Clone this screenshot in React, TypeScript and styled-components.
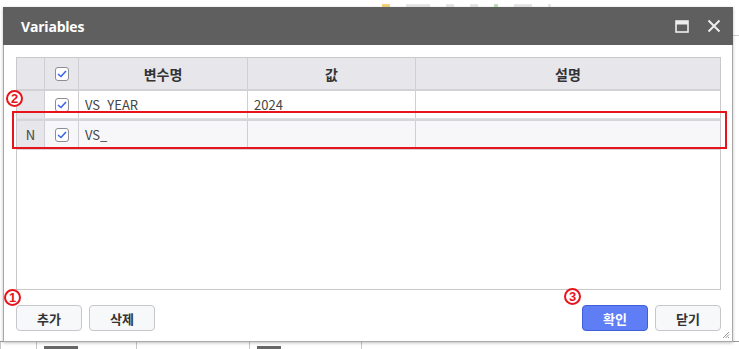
import styled, { createGlobalStyle } from "styled-components";

const GlobalStyle = createGlobalStyle`
  html, body {
    margin: 0;
    padding: 0;
    background: #ffffff;
  }
  body {
    font-family: "Noto Sans CJK KR", "Noto Sans", sans-serif;
  }
`;

const Page = styled.div`
  position: relative;
  width: 739px;
  height: 349px;
  overflow: hidden;
  background: #ffffff;
`;

// faint page behind the dialog (only its edges show)
const Backdrop = styled.div`
  position: absolute;
  inset: 0;
  display: flex;
  flex-direction: column;
  justify-content: space-between;
`;

const BackTop = styled.div`
  height: 7px;
  display: flex;
  align-items: flex-end;
  gap: 16px;
  padding-left: 382px;
`;

const Smudge = styled.span<{ $w: number; $c?: string }>`
  width: ${(p) => p.$w}px;
  height: 3px;
  background: ${(p) => p.$c || "#e6e6e6"};
`;

const BackSheet = styled.div`
  height: 7px;
  border-top: 1px solid #9a9a9a;
  display: grid;
  grid-template-columns: 36px 100px 113px 112px 1fr;
`;

const BackCell = styled.div`
  border-left: 1px solid #c8c8c8;
  padding: 4px 0 0 7px;
  display: flex;
`;

const BackRight = styled.div`
  position: absolute;
  right: 0;
  top: 35px;
  width: 6px;
  border-top: 1px solid #cfcfcf;
`;

const Dialog = styled.div`
  position: absolute;
  left: 3px;
  top: 7px;
  width: 730px;
  height: 335px;
  box-sizing: border-box;
  background: #ffffff;
  border: 1px solid #a9a9a9;
  border-top: none;
  box-shadow: 0 1px 3px rgba(0, 0, 0, 0.25);
  display: flex;
  flex-direction: column;
`;

const TitleBar = styled.div`
  height: 38px;
  margin: 0 -1px;
  background: #5f5f5f;
  display: flex;
  align-items: center;
  padding: 0 12px 0 18px;
  flex-shrink: 0;
`;

const Title = styled.div`
  flex: 1;
  color: #ffffff;
  font-family: "Open Sans", "Noto Sans", sans-serif;
  font-weight: 700;
  font-size: 14px;
  letter-spacing: -0.2px;
`;

const TitleIcons = styled.div`
  display: flex;
  align-items: center;
  gap: 18px;
`;

const Body = styled.div`
  flex: 1;
  display: flex;
  flex-direction: column;
  padding: 12px 11px 10px 12px;
`;

const Grid = styled.div`
  height: 233px;
  box-sizing: border-box;
  border: 1px solid #c9c9cc;
  display: flex;
  flex-direction: column;
  font-size: 13px;
  color: #333;
`;

const COLS = "27px 34px 169px 168px 1fr";

const HeaderRow = styled.div`
  display: grid;
  grid-template-columns: ${COLS};
  height: 31px;
  background: #e6e6eb;
  border-bottom: 2px solid #d2d2d6;
`;

const Row = styled.div<{ $alt?: boolean }>`
  display: grid;
  grid-template-columns: ${COLS};
  height: 27px;
  background: ${(p) => (p.$alt ? "#f7f7f9" : "#ffffff")};
  border-bottom: ${(p) => (p.$alt ? "2px solid #d6d6da" : "1px solid #e0e0e4")};
  border-top: ${(p) => (p.$alt ? "2px solid #d6d6da" : "none")};
`;

const Cell = styled.div<{ $center?: boolean; $head?: boolean; $gray?: boolean }>`
  display: flex;
  align-items: center;
  justify-content: ${(p) => (p.$center ? "center" : "flex-start")};
  padding: ${(p) => (p.$center ? "0" : "0 6px")};
  border-left: 1px solid #cfcfd3;
  font-size: ${(p) => (p.$head ? "14px" : "13px")};
  font-weight: ${(p) => (p.$head ? 700 : 400)};
  background: ${(p) => (p.$gray ? "#e6e6eb" : "transparent")};
  color: ${(p) => (p.$head ? "#333" : "#444")};
  &:first-child {
    border-left: none;
  }
`;

const Check = styled.span`
  width: 14px;
  height: 14px;
  box-sizing: border-box;
  border: 1px solid #8d8d95;
  border-radius: 3px;
  background: #fff;
  display: flex;
  align-items: center;
  justify-content: center;
`;

const Footer = styled.div`
  margin-top: 15px;
  display: flex;
  align-items: center;
  gap: 7px;
`;

const Spacer = styled.div`
  flex: 1;
`;

const Button = styled.button<{ $primary?: boolean }>`
  width: 66px;
  height: 26px;
  box-sizing: border-box;
  border-radius: 4px;
  border: 1px solid ${(p) => (p.$primary ? "#3f5fd8" : "#c6c6cb")};
  background: ${(p) => (p.$primary ? "#5f7ef5" : "#f7f8fa")};
  color: ${(p) => (p.$primary ? "#ffffff" : "#333333")};
  font-family: "Noto Sans CJK KR", sans-serif;
  font-size: 13px;
  font-weight: 700;
  padding: 0;
`;

const Marker = styled.div<{ $x: number; $y: number }>`
  position: absolute;
  left: ${(p) => p.$x}px;
  top: ${(p) => p.$y}px;
  width: 17px;
  height: 17px;
  box-sizing: border-box;
  border: 2px solid #e8141b;
  border-radius: 50%;
  background: #fff;
  color: #e8141b;
  font-family: "Liberation Sans", sans-serif;
  font-weight: 700;
  font-size: 13px;
  line-height: 13px;
  text-align: center;
`;

const Highlight = styled.div`
  position: absolute;
  left: 12px;
  top: 111px;
  width: 715px;
  height: 38px;
  box-sizing: border-box;
  border: 2px solid #e8141b;
`;

const Grip = styled.svg`
  position: absolute;
  right: 2px;
  bottom: 2px;
`;

function CheckBox() {
  return (
    <Check>
      <svg width="10" height="8" viewBox="0 0 10 8">
        <path d="M1 4 L4 6.5 L9 1" fill="none" stroke="#3b63f0" strokeWidth="1.6" />
      </svg>
    </Check>
  );
}

function MaxIcon() {
  return (
    <svg width="14" height="13" viewBox="0 0 14 13">
      <rect x="1" y="1" width="12" height="11" fill="none" stroke="#eeeeee" strokeWidth="1.6" />
      <rect x="1" y="1" width="12" height="3.5" fill="#eeeeee" />
    </svg>
  );
}

function CloseIcon() {
  return (
    <svg width="14" height="14" viewBox="0 0 14 14">
      <path d="M1.5 1.5 L12.5 12.5 M12.5 1.5 L1.5 12.5" stroke="#eeeeee" strokeWidth="2" />
    </svg>
  );
}

const rows = [
  { num: "", name: "VS_YEAR", value: "2024", desc: "", alt: false },
  { num: "N", name: "VS_", value: "", desc: "", alt: true },
];

export default function App() {
  return (
    <Page>
      <GlobalStyle />
      <Backdrop>
        <BackTop>
          <Smudge $w={8} $c="#f5d27a" />
          <Smudge $w={24} />
          <Smudge $w={8} />
          <Smudge $w={8} />
          <Smudge $w={4} $c="#b9e2b9" />
          <Smudge $w={18} />
          <Smudge $w={3} />
        </BackTop>
        <BackSheet>
          <BackCell />
          <BackCell>
            <Smudge $w={34} $c="#666" />
          </BackCell>
          <BackCell />
          <BackCell>
            <Smudge $w={24} $c="#666" />
          </BackCell>
          <BackCell />
        </BackSheet>
      </Backdrop>
      <BackRight />

      <Dialog>
        <TitleBar>
          <Title>Variables</Title>
          <TitleIcons>
            <MaxIcon />
            <CloseIcon />
          </TitleIcons>
        </TitleBar>
        <Body>
          <Grid>
            <HeaderRow>
              <Cell $center $head />
              <Cell $center>
                <CheckBox />
              </Cell>
              <Cell $center $head>변수명</Cell>
              <Cell $center $head>값</Cell>
              <Cell $center $head>설명</Cell>
            </HeaderRow>
            {rows.map((r, idx) => (
              <Row key={idx} $alt={r.alt}>
                <Cell $center $gray>{r.num}</Cell>
                <Cell $center>
                  <CheckBox />
                </Cell>
                <Cell>{r.name}</Cell>
                <Cell>{r.value}</Cell>
                <Cell>{r.desc}</Cell>
              </Row>
            ))}
          </Grid>
          <Footer>
            <Button>추가</Button>
            <Button>삭제</Button>
            <Spacer />
            <Button $primary>확인</Button>
            <Button>닫기</Button>
          </Footer>
        </Body>
        <Grip width="8" height="8" viewBox="0 0 8 8">
          <path d="M7 1 L1 7 M7 3.5 L3.5 7 M7 6 L6 7" stroke="#999" strokeWidth="1" />
        </Grip>
      </Dialog>

      <Highlight />
      <Marker $x={6} $y={90}>2</Marker>
      <Marker $x={4} $y={289}>1</Marker>
      <Marker $x={564} $y={288}>3</Marker>
    </Page>
  );
}
